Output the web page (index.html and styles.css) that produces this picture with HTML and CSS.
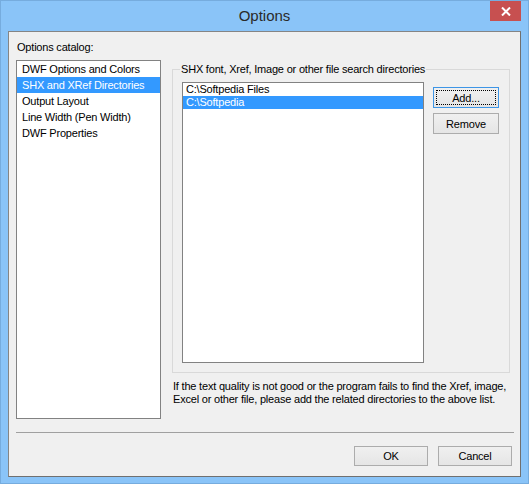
FILE: index.html
```html
<!DOCTYPE html>
<html lang="en">
<head>
    <meta charset="UTF-8">
    <title>Options</title>
    <link rel="stylesheet" href="styles.css">
</head>
<body>
    <div class="window">
        <!-- Barra de titulo -->
        <div class="titlebar">
            <span class="title">Options</span>
            <div class="close-btn">
                <svg width="10" height="9" viewBox="0 0 10 9">
                    <path d="M1 0.5 L9 8.5 M9 0.5 L1 8.5" stroke="#fff" stroke-width="2" fill="none"/>
                </svg>
            </div>
        </div>

        <div class="client">
            <div class="catalog-label">Options catalog:</div>

            <div class="main">
                <ul class="listbox catalog">
                    <li>DWF Options and Colors</li>
                    <li class="selected">SHX and XRef Directories</li>
                    <li>Output Layout</li>
                    <li>Line Width (Pen Width)</li>
                    <li>DWF Properties</li>
                </ul>

                <div class="panel">
                    <div class="groupbox">
                        <span class="group-label">SHX font, Xref, Image or other file search directories</span>
                        <ul class="listbox dirs">
                            <li>C:\Softpedia Files</li>
                            <li class="selected">C:\Softpedia</li>
                        </ul>
                        <div class="side-buttons">
                            <button class="btn side default">Add...</button>
                            <button class="btn side">Remove</button>
                        </div>
                    </div>
                    <p class="note">If the text quality is not good or the program fails to find the Xref, image,<br>Excel or other file, please add the related directories to the above list.</p>
                </div>
            </div>

            <div class="separator"></div>

            <div class="footer">
                <button class="btn wide">OK</button>
                <button class="btn wide">Cancel</button>
            </div>
        </div>
    </div>
</body>
</html>
```

FILE: styles.css
```css
body, html {
    margin: 0;
    padding: 0;
    background-color: #8ac4f8;
}
.window {
    width: 529px;
    height: 484px;
    box-sizing: border-box;
    border: 1px solid #76acde;
    background-color: #8ac4f8;
    position: relative;
    font-family: 'Liberation Sans', Arial, sans-serif;
    font-size: 11px;
    letter-spacing: -0.2px;
    color: #000;
}
.titlebar {
    height: 30px;
    display: flex;
    align-items: center;
    justify-content: center;
}
.title {
    font-size: 15px;
    letter-spacing: 0;
    color: #2a2a2a;
    padding-bottom: 1px;
}
.close-btn {
    position: absolute;
    top: 0;
    right: 7px;
    width: 31px;
    height: 20px;
    background-color: #c75050;
    display: flex;
    align-items: center;
    justify-content: center;
}
.client {
    margin: 0 7px;
    height: 446px;
    box-sizing: border-box;
    border: 1px solid #858585;
    border-right-color: #707070;
    border-bottom-color: #707070;
    background-color: #f0f0f0;
    padding: 9px 7px 0 7px;
}
.catalog-label {
    line-height: 13px;
    padding-left: 1px;
    margin-bottom: 6px;
}
.main {
    display: flex;
    align-items: flex-start;
    height: 359px;
}
.listbox {
    list-style: none;
    margin: 0;
    padding: 0;
    box-sizing: border-box;
    border: 1px solid #828282;
    background-color: #fff;
}
.listbox li {
    white-space: nowrap;
}
.listbox .selected {
    background-color: #3399ff;
    color: #fff;
}
.catalog {
    width: 145px;
    height: 359px;
}
.catalog li {
    height: 16px;
    line-height: 16px;
    padding-left: 5px;
}
.panel {
    margin-left: 11px;
    width: 338px;
}
.groupbox {
    position: relative;
    margin-top: 9px;
    height: 304px;
    box-sizing: border-box;
    border: 1px solid #d9d9d9;
    padding: 12px 0 0 9px;
    display: flex;
    align-items: flex-start;
}
.group-label {
    position: absolute;
    top: -7px;
    left: 7px;
    padding: 0 1px;
    line-height: 13px;
    background-color: #f0f0f0;
    white-space: nowrap;
}
.dirs {
    width: 242px;
    height: 281px;
}
.dirs li {
    height: 13px;
    line-height: 13px;
    padding-left: 3px;
}
.side-buttons {
    margin-left: 9px;
    margin-top: 5px;
    display: flex;
    flex-direction: column;
    gap: 5px;
}
.btn {
    font-family: inherit;
    font-size: 11px;
    letter-spacing: -0.2px;
    color: #000;
    padding: 0;
    box-sizing: border-box;
    border: 1px solid #acacac;
    border-radius: 0;
    background: linear-gradient(#f0f0f0, #e5e5e5);
}
.side {
    width: 66px;
    height: 21px;
}
.default {
    border-color: #3d95e6;
    outline: 1px dotted #000;
    outline-offset: -4px;
}
.note {
    margin: 7px 0 0 0;
    padding-left: 1px;
    line-height: 13px;
    white-space: nowrap;
}
.separator {
    margin-top: 13px;
    margin-right: -1px;
    height: 1px;
    background-color: #a0a0a0;
}
.footer {
    margin-top: 13px;
    display: flex;
    justify-content: flex-end;
    gap: 10px;
    padding-right: 1px;
}
.wide {
    width: 74px;
    height: 20px;
}
```
